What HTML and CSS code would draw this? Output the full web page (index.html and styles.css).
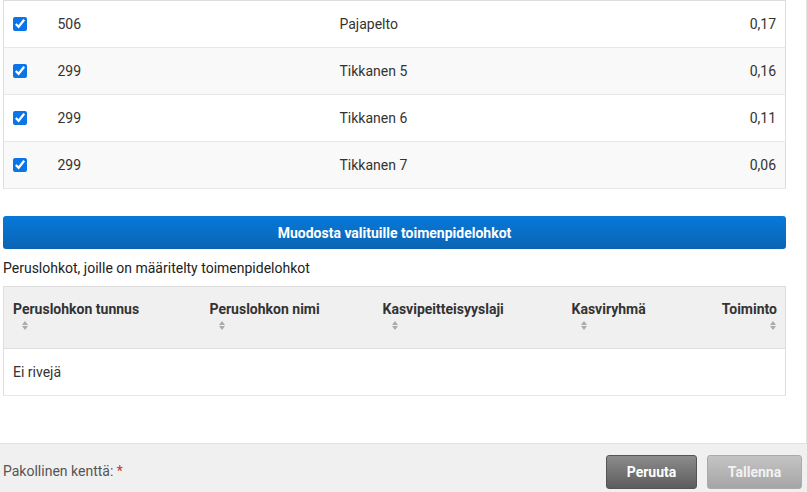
FILE: index.html
```html
<!DOCTYPE html>
<html lang="fi">
  <head>
    <meta charset="utf-8">
    <title>Toimenpidelohkot</title>
    <link rel="stylesheet" href="styles.css">
  </head>

  <body>
    <div class="dialog">
      <div class="content">
        <table class="grid selectable">
          <tbody>
            <tr>
              <td class="check"><input type="checkbox" checked></td>
              <td class="code">506</td>
              <td class="name">Pajapelto</td>
              <td class="area">0,17</td>
            </tr>
            <tr>
              <td class="check"><input type="checkbox" checked></td>
              <td class="code">299</td>
              <td class="name">Tikkanen 5</td>
              <td class="area">0,16</td>
            </tr>
            <tr>
              <td class="check"><input type="checkbox" checked></td>
              <td class="code">299</td>
              <td class="name">Tikkanen 6</td>
              <td class="area">0,11</td>
            </tr>
            <tr>
              <td class="check"><input type="checkbox" checked></td>
              <td class="code">299</td>
              <td class="name">Tikkanen 7</td>
              <td class="area">0,06</td>
            </tr>
          </tbody>
        </table>

        <button class="primaryBtn">Muodosta valituille toimenpidelohkot</button>

        <p class="sectionTitle">Peruslohkot, joille on määritelty toimenpidelohkot</p>

        <table class="grid defined">
          <thead>
            <tr>
              <th class="c1">Peruslohkon tunnus<span class="sort"></span></th>
              <th class="c2">Peruslohkon nimi<span class="sort"></span></th>
              <th class="c3">Kasvipeitteisyyslaji<span class="sort"></span></th>
              <th class="c4">Kasviryhmä<span class="sort"></span></th>
              <th class="c5">Toiminto<span class="sort"></span></th>
            </tr>
          </thead>
          <tbody>
            <tr>
              <td colspan="5" class="empty">Ei rivejä</td>
            </tr>
          </tbody>
        </table>
      </div>

      <div class="footer">
        <span class="required">Pakollinen kenttä: <span class="star">*</span></span>
        <div class="actions">
          <button class="btn cancel">Peruuta</button>
          <button class="btn save" disabled>Tallenna</button>
        </div>
      </div>
    </div>
  </body>
</html>
```

FILE: styles.css
```css
html, body {
  margin: 0;
  height: 100%;
}

body {
  font-family: Roboto, 'Liberation Sans', sans-serif;
  font-size: 14px;
  color: #333;
  background: #fff;
}

.dialog {
  display: flex;
  flex-direction: column;
  height: 100vh;
}

.content {
  flex: 1;
  overflow: hidden;
  padding: 0 20px 0 3px;
  border-right: 1px solid #e2e2e2;
}

.grid {
  width: 100%;
  border-collapse: collapse;
  border: 1px solid #ddd;
}

.grid td {
  border-bottom: 1px solid #e6e6e6;
}

.selectable td {
  height: 47px;
  padding: 0 9px;
  box-sizing: border-box;
}

.selectable tr:nth-child(even) td {
  background: #f9f9f9;
}

.selectable .check {
  width: 45px;
  padding-right: 0;
}

.selectable .check input {
  width: 14px;
  height: 14px;
  margin: 2px 0 0 0;
  accent-color: #0a75e8;
}

.selectable .code {
  width: 282px;
  padding-left: 9px;
}

.selectable .area {
  text-align: right;
}

.primaryBtn {
  display: block;
  width: 100%;
  height: 33px;
  margin-top: 27px;
  border: none;
  border-radius: 3px;
  background: linear-gradient(to bottom, #0779d9, #0b64b3);
  color: #fff;
  font-family: inherit;
  font-size: 14px;
  font-weight: bold;
  cursor: pointer;
}

.sectionTitle {
  margin: 11px 0 10px;
  font-size: 14px;
  font-weight: 400;
  color: #222;
}

.defined th {
  height: 62px;
  padding: 14px 9px 0;
  vertical-align: top;
  text-align: left;
  background: #f0f0f0;
  border-bottom: 1px solid #ddd;
  font-weight: bold;
  color: #333;
  box-sizing: border-box;
}

.defined .c1 { width: 197px; }
.defined .c2 { width: 173px; }
.defined .c3 { width: 189px; }
.defined .c5 {
  text-align: right;
  padding-right: 8px;
}

.sort {
  display: block;
  position: relative;
  width: 7px;
  height: 10px;
  margin: 4px 0 0 9px;
}

.sort::before,
.sort::after {
  content: "";
  position: absolute;
  left: 0;
  border-left: 3.5px solid transparent;
  border-right: 3.5px solid transparent;
}

.sort::before {
  top: 0;
  border-bottom: 4px solid #aaa;
}

.sort::after {
  top: 5px;
  border-top: 4px solid #aaa;
}

.c5 .sort {
  margin-left: auto;
  margin-right: 0;
}

.defined .empty {
  height: 46px;
  padding: 0 9px;
  background: #fff;
}

.footer {
  height: 48px;
  flex-shrink: 0;
  display: flex;
  align-items: center;
  justify-content: space-between;
  padding: 0 5px 0 3px;
  background: #f0f0f0;
  border-top: 1px solid #e2e2e2;
}

.required {
  color: #555;
  font-size: 14px;
  margin-top: 6px;
}

.star {
  color: #c9302c;
}

.actions {
  display: flex;
  gap: 10px;
  margin-top: 7px;
}

.btn {
  height: 34px;
  border-radius: 3px;
  font-family: inherit;
  font-size: 14px;
  font-weight: bold;
  color: #fff;
  cursor: pointer;
}

.cancel {
  width: 91px;
  border: 1px solid #555;
  background: linear-gradient(to bottom, #8c8c8c, #5c5c5c);
}

.save {
  width: 95px;
  border: 1px solid #aaa;
  background: linear-gradient(to bottom, #c4c4c4, #a5a5a5);
  color: #f2f2f2;
  cursor: default;
}
```
